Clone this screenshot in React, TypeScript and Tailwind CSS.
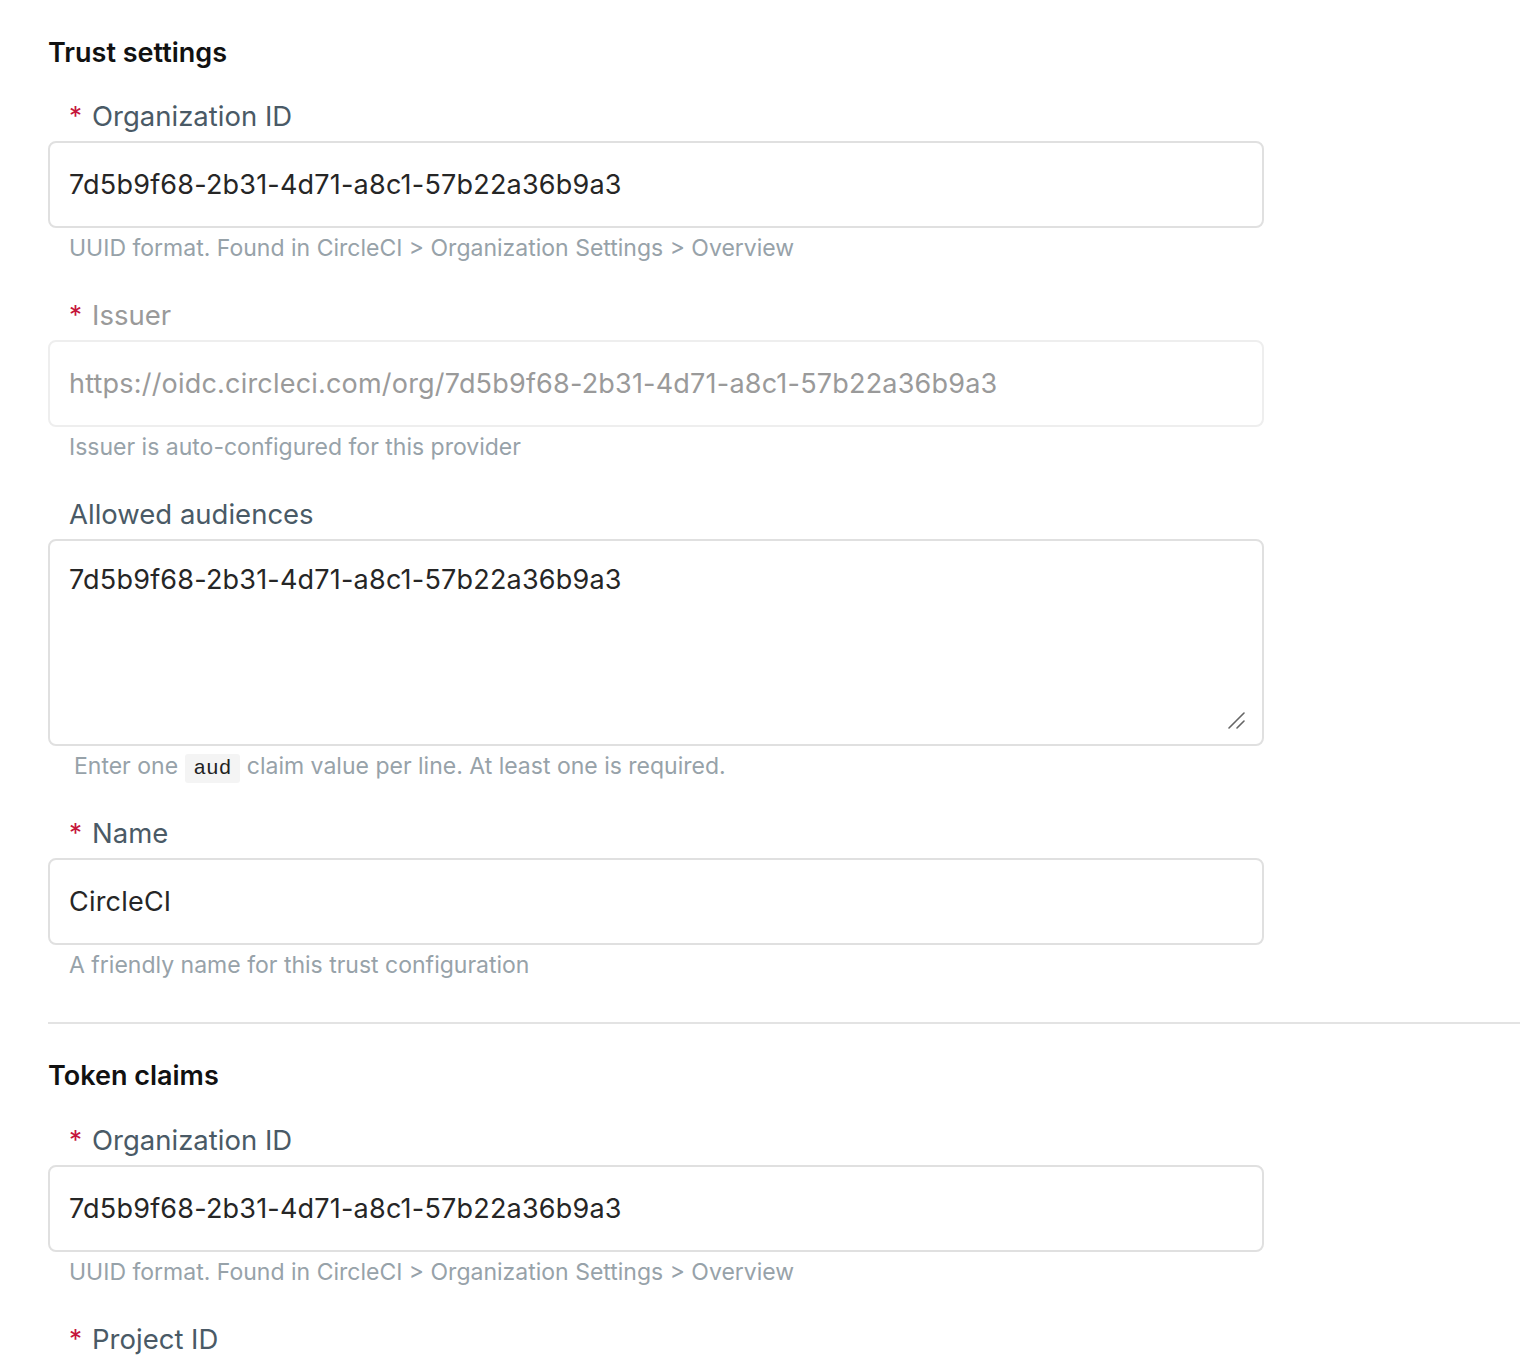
const font = { fontFamily: "Inter, 'Noto Sans', sans-serif" };

function Label({ text, required, disabled }: { text: string; required?: boolean; disabled?: boolean }) {
  return (
    <label
      className={`flex h-[36px] items-center pl-[21px] text-[27.5px] leading-[36px] ${
        disabled ? "text-[#9a9a9a]" : "text-[#4a5a66]"
      }`}
    >
      {required && <span className="mr-[10px] text-[26px] text-[#c5163b]">*</span>}
      {text}
    </label>
  );
}

function Helper({ children, className = "" }: { children: React.ReactNode; className?: string }) {
  return (
    <p className={`mt-[5px] h-[30px] pl-[21px] text-[23px] leading-[30px] text-[#97a2a9] ${className}`}>
      {children}
    </p>
  );
}

function TextField({
  label,
  value,
  help,
  required,
  disabled,
}: {
  label: string;
  value: string;
  help: string;
  required?: boolean;
  disabled?: boolean;
}) {
  return (
    <div className="max-w-[1216px]">
      <Label text={label} required={required} disabled={disabled} />
      <input
        readOnly
        value={value}
        className={`mt-[7px] h-[87px] w-full rounded-[8px] border-2 bg-white px-[19px] text-[27px] tracking-[0.2px] outline-none ${
          disabled ? "border-[#eeeeee] text-[#9a9a9a]" : "border-[#e0e0e0] text-[#262626]"
        }`}
        style={font}
      />
      <Helper>{help}</Helper>
    </div>
  );
}

export default function App() {
  const uuid = "7d5b9f68-2b31-4d71-a8c1-57b22a36b9a3";
  const uuidHelp = "UUID format. Found in CircleCI > Organization Settings > Overview";
  return (
    <main className="min-h-screen bg-white pl-[48px] pt-[35px]" style={font}>
      <section className="pb-[42px]">
        <h2 className="h-[36px] text-[27px] font-semibold leading-[36px] text-[#111111]">Trust settings</h2>
        <div className="mt-[27px] flex flex-col gap-[34px]">
          <TextField label="Organization ID" value={uuid} help={uuidHelp} required />
          <TextField
            label="Issuer"
            value={`https://oidc.circleci.com/org/${uuid}`}
            help="Issuer is auto-configured for this provider"
            required
            disabled
          />
          <div className="max-w-[1216px]">
            <Label text="Allowed audiences" />
            <div className="relative mt-[7px]">
              <textarea
                readOnly
                value={uuid}
                className="block h-[207px] w-full resize-none rounded-[8px] border-2 border-[#e0e0e0] bg-white px-[19px] pt-[21px] text-[27px] leading-[36px] tracking-[0.2px] text-[#262626] outline-none"
                style={font}
              />
              <svg
                className="pointer-events-none absolute bottom-[17px] right-[19px]"
                width="17"
                height="17"
                viewBox="0 0 17 17"
              >
                <path d="M1 16 L16 1 M9 16 L16 9" stroke="#666" strokeWidth="1.6" strokeLinecap="round" />
              </svg>
            </div>
            <Helper className="pl-[26px]">
              Enter one{" "}
              <code className="rounded-[3px] bg-[#f4f4f4] px-[9px] py-[3px] font-['Liberation_Mono',monospace] text-[21px] text-[#222]">
                aud
              </code>{" "}
              claim value per line. At least one is required.
            </Helper>
          </div>
          <TextField
            label="Name"
            value="CircleCI"
            help="A friendly name for this trust configuration"
            required
          />
        </div>
      </section>
      <section className="border-t-2 border-[#e3e3e3] pt-[34px]">
        <h2 className="h-[36px] text-[27px] font-semibold leading-[36px] text-[#111111]">Token claims</h2>
        <div className="mt-[28px] flex flex-col gap-[34px]">
          <TextField label="Organization ID" value={uuid} help={uuidHelp} required />
          <div className="max-w-[1216px]">
            <Label text="Project ID" required />
          </div>
        </div>
      </section>
    </main>
  );
}
